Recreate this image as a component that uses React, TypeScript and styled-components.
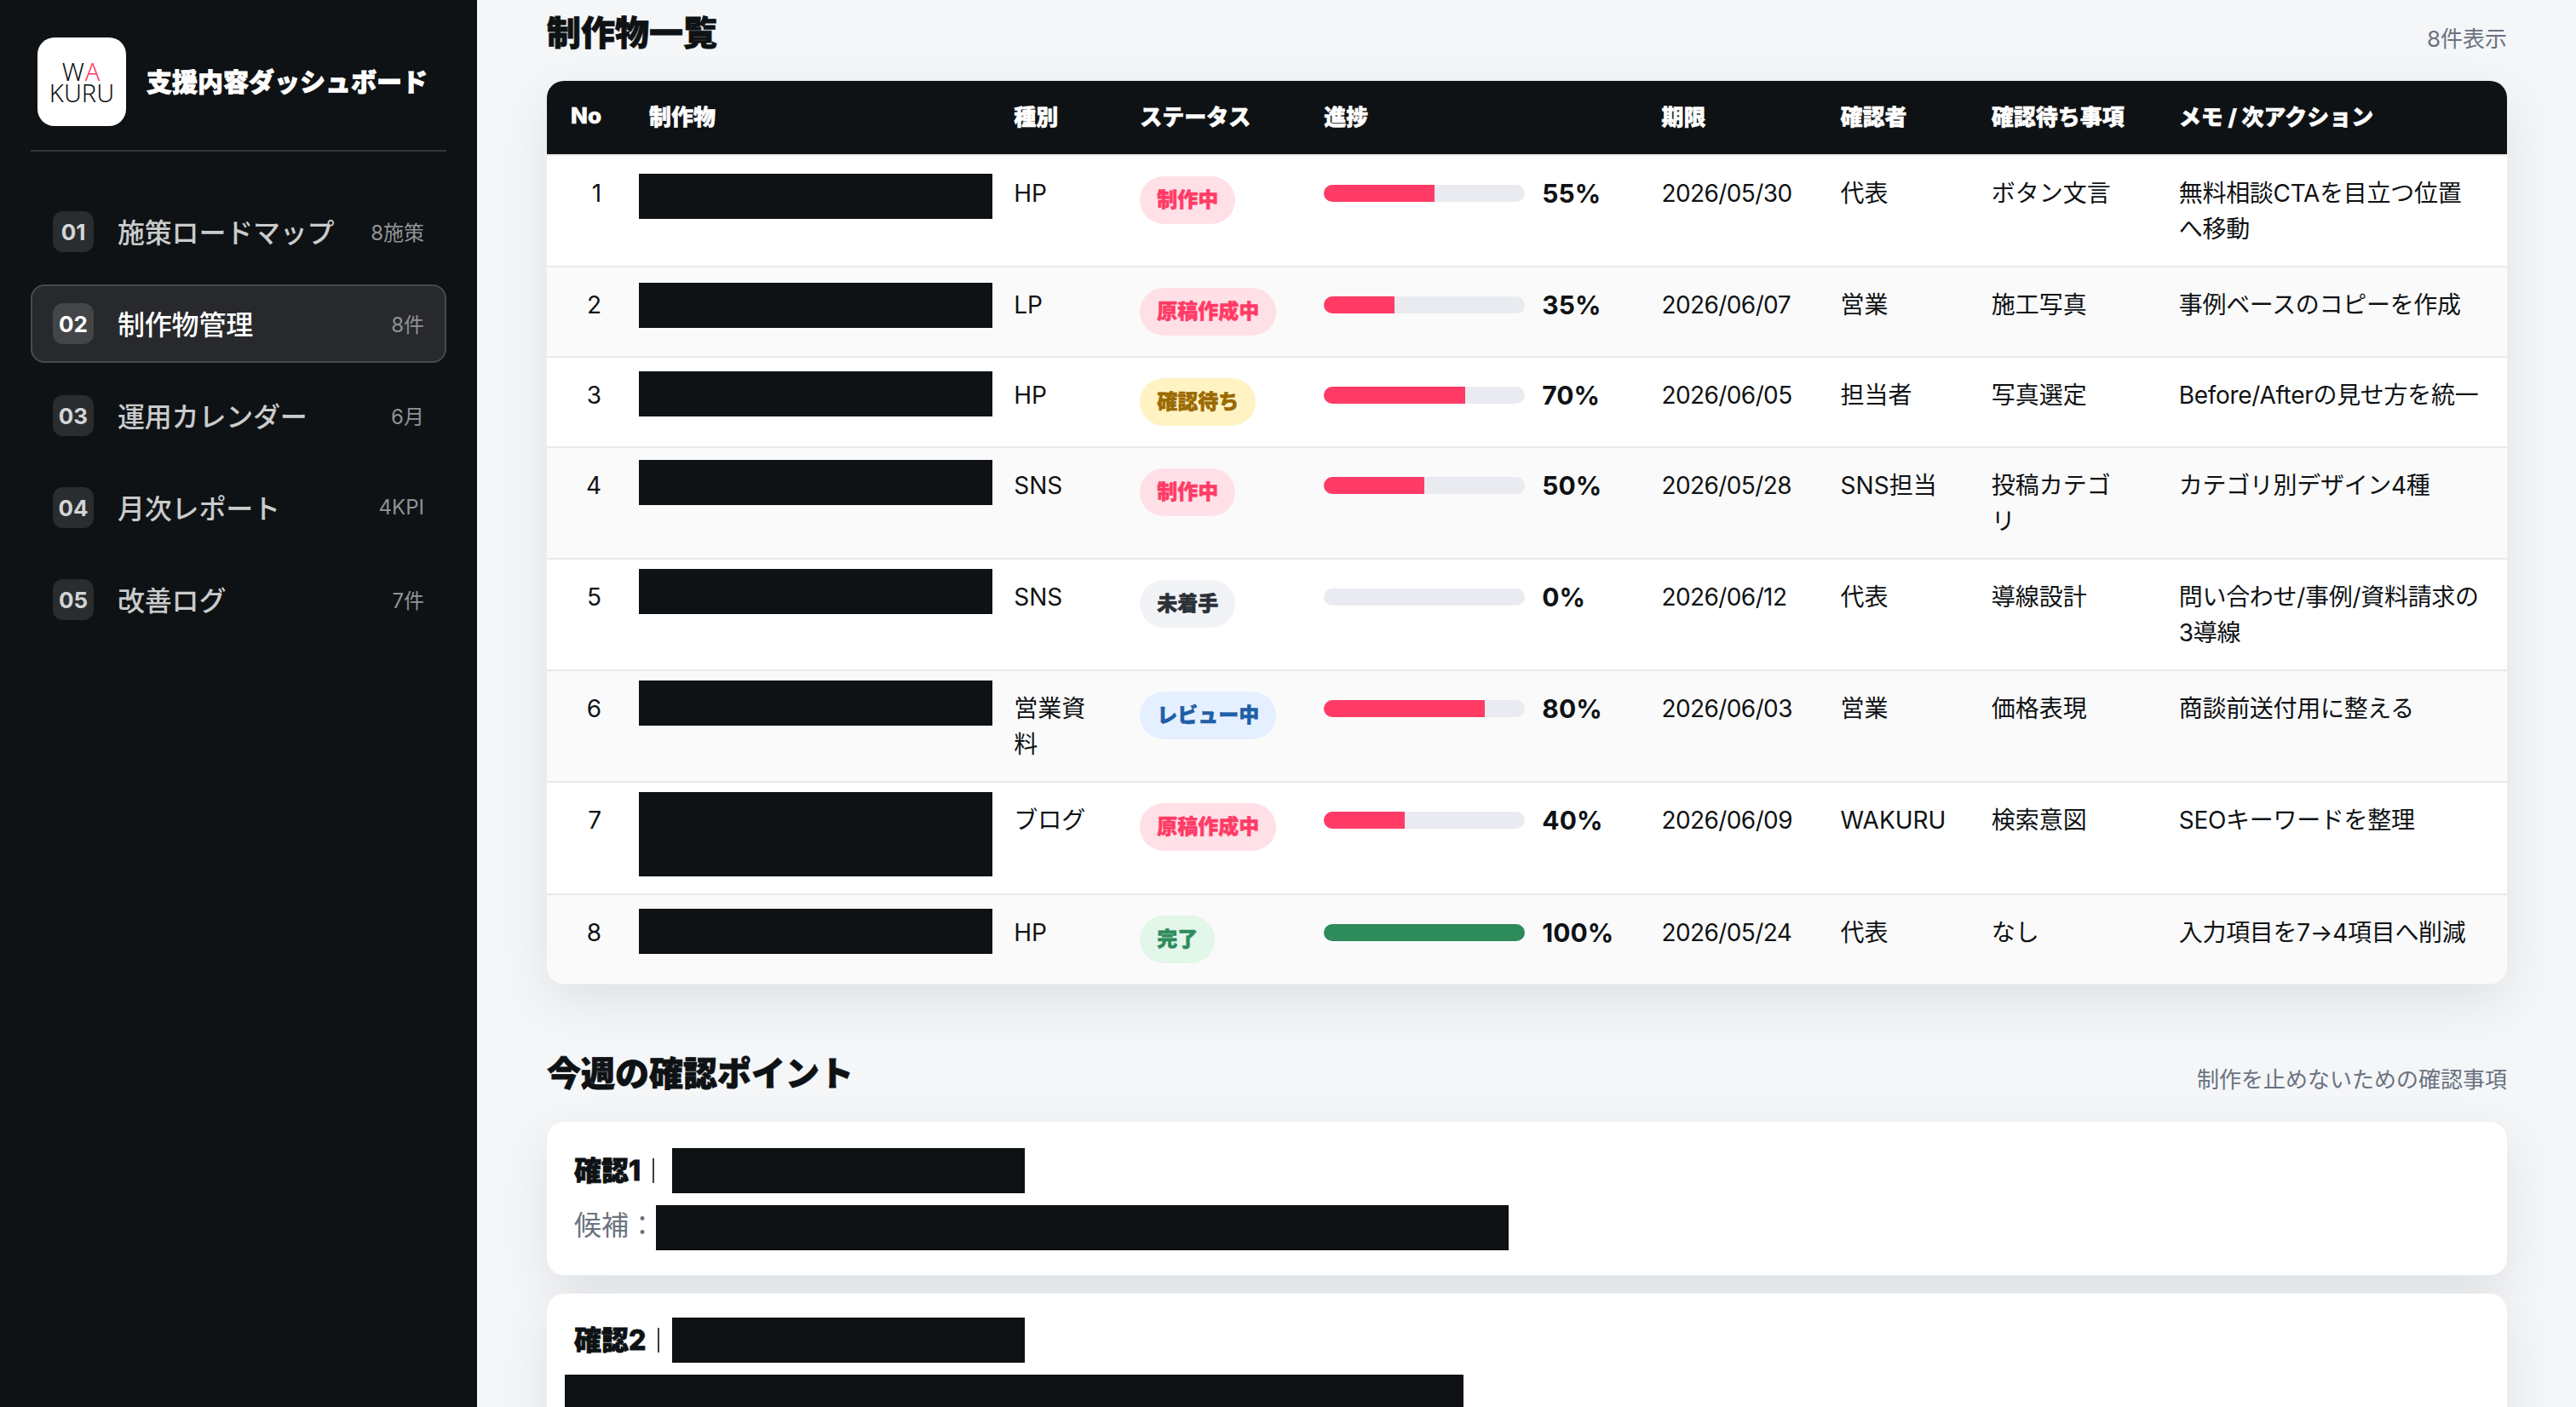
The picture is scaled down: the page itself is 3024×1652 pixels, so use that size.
import React from 'react'
import styled, {createGlobalStyle} from 'styled-components'

const INK = '#0f1214'
const PINK = '#ff3b66'
const HEAVY = '-webkit-text-stroke: 0.8px currentColor;'
const SEMI_HEAVY = '-webkit-text-stroke: 0.5px currentColor;'

const GlobalStyle = createGlobalStyle`
    * {
        box-sizing: border-box;
    }
    html, body {
        margin: 0;
        height: 100%;
        overflow: hidden;
        background: #f4f6f8;
        font-family: Inter, "Noto Sans CJK JP", sans-serif;
        color: ${INK};
    }
`

const Page = styled.div`
    display: flex;
    width: 3024px;
    height: 1652px;
    overflow: hidden;
`

const Sidebar = styled.aside`
    flex: 0 0 560px;
    background: ${INK};
    padding: 44px 36px;
`

const Brand = styled.div`
    display: flex;
    align-items: center;
    gap: 24px;
    padding: 0 8px 28px;
    border-bottom: 2px solid #33363a;
`

const Logo = styled.div`
    width: 104px;
    height: 104px;
    border-radius: 20px;
    background: #fff;
    color: ${INK};
    display: flex;
    flex-direction: column;
    justify-content: center;
    align-items: center;
    font-family: "Noto Sans", sans-serif;
    font-weight: 300;
    font-size: 29px;
    line-height: 25px;
`

const LogoWa = styled.span`
    letter-spacing: 2px;

    em {
        font-style: normal;
        color: ${PINK};
    }
`

const BrandTitle = styled.h1`
    margin: 0;
    padding-bottom: 5px;
    color: #fff;
    font-size: 30px;
    font-weight: 900;
    white-space: nowrap;
    ${HEAVY}
`

const Nav = styled.nav`
    display: flex;
    flex-direction: column;
    gap: 16px;
    margin-top: 48px;
`

const NavItem = styled.a<{ $active?: boolean }>`
    display: flex;
    align-items: center;
    height: 92px;
    padding: 0 24px;
    border: 2px solid ${(props) => (props.$active ? '#47494c' : 'transparent')};
    border-radius: 16px;
    background: ${(props) => (props.$active ? '#28292c' : 'transparent')};
    color: ${(props) => (props.$active ? '#fff' : '#c9cbcd')};
`

const NavNum = styled.span<{ $active?: boolean }>`
    flex: 0 0 48px;
    height: 48px;
    display: flex;
    align-items: center;
    justify-content: center;
    margin-right: 28px;
    border-radius: 12px;
    background: ${(props) => (props.$active ? '#434548' : '#2a2d30')};
    color: ${(props) => (props.$active ? '#fff' : '#d4d5d6')};
    font-size: 26px;
    font-weight: 700;
`

const NavLabel = styled.span`
    flex: 1;
    padding-bottom: 2px;
    font-size: 32px;
    font-weight: 500;
    letter-spacing: -0.2px;
    white-space: nowrap;
`

const NavCount = styled.span`
    padding-bottom: 2px;
    font-size: 24px;
    color: #8f9295;
    white-space: nowrap;
`

const Main = styled.main`
    flex: 1;
    padding: 9px 81px 0 82px;
`

const SectionHead = styled.div`
    display: flex;
    justify-content: space-between;
    align-items: center;
    height: 54px;
    margin-bottom: 32px;
`

const SectionTitle = styled.h2`
    margin: 0;
    font-size: 40px;
    font-weight: 900;
    ${HEAVY}
`

const SectionNote = styled.span`
    font-size: 26px;
    color: #6b7280;
    margin-top: 14px;
`

const TableCard = styled.div`
    border-radius: 20px;
    overflow: hidden;
    background: #fff;
    box-shadow: 0 0 0 1px #eceef1, 0 20px 60px rgba(15, 18, 20, 0.09);
    margin-bottom: 76px;
`

const Table = styled.table`
    width: 100%;
    table-layout: fixed;
    border-collapse: separate;
    border-spacing: 0;
`

const Th = styled.th<{ $right?: boolean }>`
    height: 88px;
    padding: 0 32px 6px ${(props) => (props.$right ? '0' : '24px')};
    background: ${INK};
    border-bottom: 2px solid #e8e9ec;
    color: #fff;
    font-size: 26px;
    font-weight: 800;
    text-align: ${(props) => (props.$right ? 'right' : 'left')};
    white-space: nowrap;
    ${SEMI_HEAVY}
`

const Row = styled.tr`
    &:nth-child(even) td {
        background: #fafafa;
    }
    &:last-child td {
        border-bottom: none;
    }
`

const Td = styled.td<{ $right?: boolean }>`
    padding: 23px 32px 22px ${(props) => (props.$right ? '0' : '24px')};
    border-bottom: 2px solid #e8e9ec;
    font-size: 28px;
    line-height: 42px;
    vertical-align: top;
    text-align: ${(props) => (props.$right ? 'right' : 'left')};
`

const MemoCell = styled(Td)`
    padding-right: 28px;
    letter-spacing: -0.3px;
`

const BlankCell = styled.td`
    padding: 0 0 0 12px;
    border-bottom: 2px solid #e8e9ec;
    vertical-align: top;
`

const Redacted = styled.div<{ $top?: number, $tall?: boolean }>`
    width: 415px;
    height: ${(props) => (props.$tall ? '99px' : '53px')};
    margin-top: ${(props) => props.$top ?? 0}px;
    margin-bottom: ${(props) => (props.$tall ? '20px' : '0')};
    background: ${INK};
`

const tones = {
    pink: {bg: '#ffe0e7', fg: PINK},
    yellow: {bg: '#fff3c4', fg: '#9a6a00'},
    gray: {bg: '#f1f3f6', fg: '#2b3036'},
    blue: {bg: '#e4f0ff', fg: '#1f5fa6'},
    green: {bg: '#e2f6e9', fg: '#2e8b5c'},
}

type Tone = keyof typeof tones

const Pill = styled.span<{ $tone: Tone }>`
    display: inline-flex;
    align-items: center;
    height: 56px;
    margin: 1px 0 2px;
    padding: 0 20px;
    border-radius: 28px;
    vertical-align: top;
    background: ${(props) => tones[props.$tone].bg};
    color: ${(props) => tones[props.$tone].fg};
    font-size: 24px;
    font-weight: 800;
    white-space: nowrap;
    ${SEMI_HEAVY}
`

const Progress = styled.div`
    display: flex;
    align-items: flex-start;
    gap: 20px;
`

const Track = styled.div`
    flex: 0 0 236px;
    height: 20px;
    margin-top: 11px;
    border-radius: 10px;
    overflow: hidden;
    background: #e9ebf1;
`

const Fill = styled.div<{ $done?: boolean }>`
    height: 100%;
    background: ${(props) => (props.$done ? '#2e8b5c' : PINK)};
`

const Percent = styled.span`
    font-size: 30px;
    font-weight: 700;
    white-space: nowrap;
`

const DueDate = styled.span`
    letter-spacing: -0.6px;
`

const CheckCard = styled.section<{ $pad: number }>`
    height: 180px;
    margin-bottom: 22px;
    padding: ${(props) => props.$pad}px 32px 0;
    border-radius: 20px;
    background: #fff;
    box-shadow: 0 0 0 1px #eceef1, 0 20px 60px rgba(15, 18, 20, 0.09);
`

const CheckLine = styled.div`
    display: flex;
    align-items: center;
    height: 53px;
    margin-bottom: 14px;
`

const CheckHead = styled.div`
    flex: 0 0 115px;
    display: flex;
    align-items: center;
    gap: 14px;
`

const CheckName = styled.strong`
    padding-bottom: 6px;
    font-size: 32px;
    font-weight: 800;
    white-space: nowrap;
    ${HEAVY}
`

const Divider = styled.i`
    flex: 0 0 2px;
    height: 29px;
    background: #3a3d40;
`

const CheckBlank = styled.div<{ $width: number, $left?: number }>`
    flex: 0 0 ${(props) => props.$width}px;
    height: 53px;
    margin-left: ${(props) => props.$left ?? 0}px;
    background: ${INK};
`

const Candidate = styled.span`
    padding-bottom: 12px;
    font-size: 32px;
    color: #6b7280;
    white-space: nowrap;
`

const navItems = [
    {no: '01', label: '施策ロードマップ', count: '8施策'},
    {no: '02', label: '制作物管理', count: '8件', active: true},
    {no: '03', label: '運用カレンダー', count: '6月'},
    {no: '04', label: '月次レポート', count: '4KPI'},
    {no: '05', label: '改善ログ', count: '7件'},
]

const columns = [96, 428, 148, 216, 396, 210, 177, 220, 409]
const headers = ['No', '制作物', '種別', 'ステータス', '進捗', '期限', '確認者', '確認待ち事項', 'メモ / 次アクション']

const rows: { type: string, status: string, tone: Tone, progress: number, due: string, owner: string, wait: string, memo: string, top: number, tall?: boolean }[] = [
    {type: 'HP', status: '制作中', tone: 'pink', progress: 55, due: '2026/05/30', owner: '代表', wait: 'ボタン文言', memo: '無料相談CTAを目立つ位置へ移動', top: 21},
    {type: 'LP', status: '原稿作成中', tone: 'pink', progress: 35, due: '2026/06/07', owner: '営業', wait: '施工写真', memo: '事例ベースのコピーを作成', top: 18},
    {type: 'HP', status: '確認待ち', tone: 'yellow', progress: 70, due: '2026/06/05', owner: '担当者', wait: '写真選定', memo: 'Before/Afterの見せ方を統一', top: 16},
    {type: 'SNS', status: '制作中', tone: 'pink', progress: 50, due: '2026/05/28', owner: 'SNS担当', wait: '投稿カテゴリ', memo: 'カテゴリ別デザイン4種', top: 14},
    {type: 'SNS', status: '未着手', tone: 'gray', progress: 0, due: '2026/06/12', owner: '代表', wait: '導線設計', memo: '問い合わせ/事例/資料請求の3導線', top: 11},
    {type: '営業資料', status: 'レビュー中', tone: 'blue', progress: 80, due: '2026/06/03', owner: '営業', wait: '価格表現', memo: '商談前送付用に整える', top: 11},
    {type: 'ブログ', status: '原稿作成中', tone: 'pink', progress: 40, due: '2026/06/09', owner: 'WAKURU', wait: '検索意図', memo: 'SEOキーワードを整理', top: 11, tall: true},
    {type: 'HP', status: '完了', tone: 'green', progress: 100, due: '2026/05/24', owner: '代表', wait: 'なし', memo: '入力項目を7→4項目へ削減', top: 16},
]

export default function App(): React.JSX.Element {
    return <Page>
        <GlobalStyle/>
        <Sidebar>
            <Brand>
                <Logo>
                    <LogoWa>W<em>A</em></LogoWa>
                    <span>KURU</span>
                </Logo>
                <BrandTitle>支援内容ダッシュボード</BrandTitle>
            </Brand>
            <Nav>
                {navItems.map((item) => <NavItem key={item.no} $active={item.active}>
                    <NavNum $active={item.active}>{item.no}</NavNum>
                    <NavLabel>{item.label}</NavLabel>
                    <NavCount>{item.count}</NavCount>
                </NavItem>)}
            </Nav>
        </Sidebar>
        <Main>
            <SectionHead>
                <SectionTitle>制作物一覧</SectionTitle>
                <SectionNote>8件表示</SectionNote>
            </SectionHead>
            <TableCard>
                <Table>
                    <colgroup>
                        {columns.map((width, i) => <col key={i} width={width}/>)}
                    </colgroup>
                    <thead>
                        <tr>
                            {headers.map((title, i) => <Th key={title} $right={i === 0}>{title}</Th>)}
                        </tr>
                    </thead>
                    <tbody>
                        {rows.map((row, i) => <Row key={i}>
                            <Td $right>{i + 1}</Td>
                            <BlankCell><Redacted $top={row.top} $tall={row.tall}/></BlankCell>
                            <Td>{row.type}</Td>
                            <Td><Pill $tone={row.tone}>{row.status}</Pill></Td>
                            <Td>
                                <Progress>
                                    <Track>
                                        <Fill $done={row.progress === 100} style={{width: `${row.progress}%`}}/>
                                    </Track>
                                    <Percent>{row.progress}%</Percent>
                                </Progress>
                            </Td>
                            <Td><DueDate>{row.due}</DueDate></Td>
                            <Td>{row.owner}</Td>
                            <Td>{row.wait}</Td>
                            <MemoCell>{row.memo}</MemoCell>
                        </Row>)}
                    </tbody>
                </Table>
            </TableCard>
            <SectionHead>
                <SectionTitle>今週の確認ポイント</SectionTitle>
                <SectionNote>制作を止めないための確認事項</SectionNote>
            </SectionHead>
            <CheckCard $pad={31}>
                <CheckLine>
                    <CheckHead>
                        <CheckName>確認1</CheckName>
                        <Divider/>
                    </CheckHead>
                    <CheckBlank $width={414}/>
                </CheckLine>
                <CheckLine>
                    <Candidate>候補：</Candidate>
                    <CheckBlank $width={1001}/>
                </CheckLine>
            </CheckCard>
            <CheckCard $pad={28}>
                <CheckLine>
                    <CheckHead>
                        <CheckName>確認2</CheckName>
                        <Divider/>
                    </CheckHead>
                    <CheckBlank $width={414}/>
                </CheckLine>
                <CheckLine>
                    <CheckBlank $width={1055} $left={-11}/>
                </CheckLine>
            </CheckCard>
        </Main>
    </Page>
}
